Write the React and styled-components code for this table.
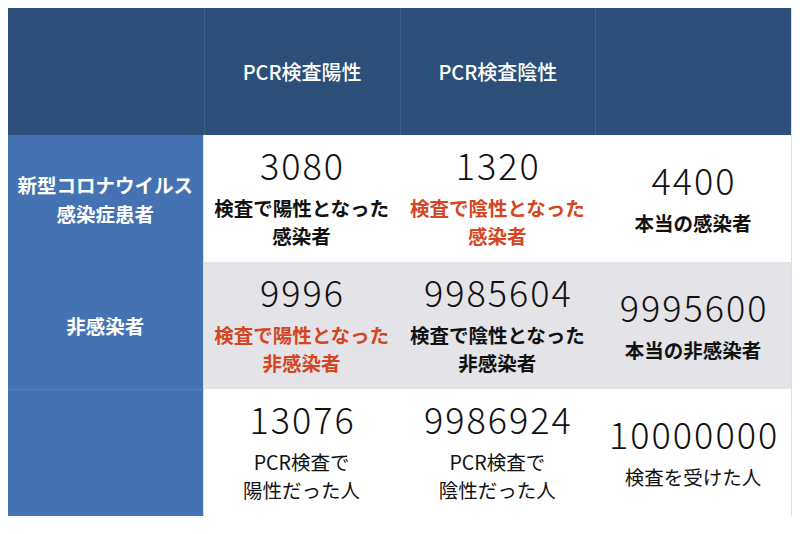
import styled, { createGlobalStyle } from 'styled-components';

const GlobalStyle = createGlobalStyle`
  body {
    margin: 8px;
    background-color: #ffffff;
    font-family: "Noto Sans CJK JP", "Noto Sans", sans-serif;
  }
`;

const color = {
  header: '#2c5079',
  headerLine: '#3f6290',
  side: '#4472b2',
  sideLine: '#5580bb',
  grey: '#e3e3e8',
  white: '#ffffff',
  red: '#d4461f',
  text: '#111111',
  edge: '#d6e1ee',
};

const Table = styled.div`
  width: 783px;
  display: grid;
  grid-template-columns: repeat(4, 1fr);
  grid-auto-rows: 127px;
  border-right: 1px solid ${color.edge};
`;

const HeadCell = styled.div`
  display: flex;
  align-items: center;
  justify-content: center;
  background-color: ${color.header};
  border-left: ${(p) => (p.$first ? 'none' : `1px solid ${color.headerLine}`)};
  color: ${color.white};
  font-size: 20px;
  font-weight: 500;
`;

const SideCell = styled.div`
  display: flex;
  flex-direction: column;
  align-items: center;
  justify-content: center;
  background-color: ${color.side};
  border-top: ${(p) => (p.$line ? `1px solid ${color.sideLine}` : 'none')};
  border-right: 1px solid ${color.edge};
  color: ${color.white};
  font-size: 19.5px;
  font-weight: 700;
  line-height: 29px;
  text-align: center;
`;

const DataCell = styled.div`
  display: flex;
  flex-direction: column;
  align-items: center;
  justify-content: center;
  padding-bottom: ${(p) => (p.$short ? '2px' : '5px')};
  background-color: ${(p) => (p.$grey ? color.grey : color.white)};
  color: ${color.text};
  text-align: center;
`;

const Count = styled.div`
  margin-bottom: 8px;
  padding-left: 2px;
  font-size: 36px;
  font-weight: 300;
  line-height: 44px;
  letter-spacing: 2px;
`;

const Label = styled.div`
  color: ${(p) => (p.$red ? color.red : color.text)};
  font-size: 19.5px;
  font-weight: ${(p) => (p.$plain ? 400 : 700)};
  line-height: 28.5px;
`;

const rows = [
  {
    side: ['新型コロナウイルス', '感染症患者'],
    cells: [
      { count: '3080', label: ['検査で陽性となった', '感染者'] },
      { count: '1320', label: ['検査で陰性となった', '感染者'], red: true },
      { count: '4400', label: ['本当の感染者'] },
    ],
  },
  {
    side: ['非感染者'],
    grey: true,
    cells: [
      { count: '9996', label: ['検査で陽性となった', '非感染者'], red: true },
      { count: '9985604', label: ['検査で陰性となった', '非感染者'] },
      { count: '9995600', label: ['本当の非感染者'] },
    ],
  },
  {
    side: [],
    plain: true,
    cells: [
      { count: '13076', label: ['PCR検査で', '陽性だった人'] },
      { count: '9986924', label: ['PCR検査で', '陰性だった人'] },
      { count: '10000000', label: ['検査を受けた人'] },
    ],
  },
];

const App = () => {
  return (
    <>
      <GlobalStyle />
      <Table>
        <HeadCell $first />
        <HeadCell>PCR検査陽性</HeadCell>
        <HeadCell>PCR検査陰性</HeadCell>
        <HeadCell />
        {rows.map((row, i) => (
          <>
            <SideCell key={`side-${i}`} $line={i === 2}>
              {row.side.map((line) => (
                <div key={line}>{line}</div>
              ))}
            </SideCell>
            {row.cells.map((cell) => (
              <DataCell key={cell.count} $grey={row.grey} $short={cell.label.length === 1}>
                <Count>{cell.count}</Count>
                {cell.label.map((line) => (
                  <Label key={line} $red={cell.red} $plain={row.plain}>
                    {line}
                  </Label>
                ))}
              </DataCell>
            ))}
          </>
        ))}
      </Table>
    </>
  );
};

export default App;
